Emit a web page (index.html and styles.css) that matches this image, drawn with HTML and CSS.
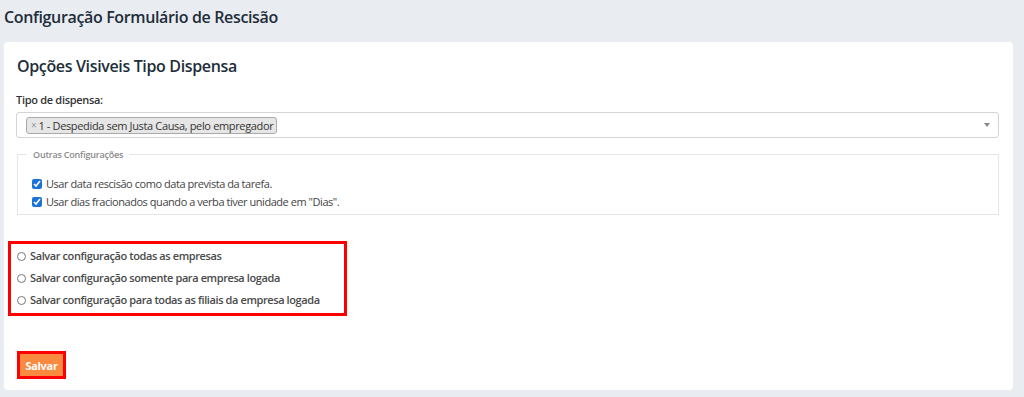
FILE: index.html
```html
<!DOCTYPE html>
<html lang="pt-BR">
<head>
<meta charset="utf-8">
<title>Configuração Formulário de Rescisão</title>
<link rel="stylesheet" href="styles.css">
</head>
<body>
<h1 class="page-title">Configuração Formulário de Rescisão</h1>
<div class="card">
  <h2 class="card-title">Opções Visiveis Tipo Dispensa</h2>
  <label class="field-label">Tipo de dispensa:</label>
  <div class="select-box">
    <span class="tag"><span class="tag-x">×</span>1 - Despedida sem Justa Causa, pelo empregador</span>
    <span class="caret"></span>
  </div>
  <fieldset class="group">
    <legend>Outras Configurações</legend>
    <label class="check"><input type="checkbox" checked> Usar data rescisão como data prevista da tarefa.</label>
    <label class="check"><input type="checkbox" checked> Usar dias fracionados quando a verba tiver unidade em "Dias".</label>
  </fieldset>
  <div class="radio-box">
    <label class="radio"><input type="radio" name="scope"> Salvar configuração todas as empresas</label>
    <label class="radio"><input type="radio" name="scope"> Salvar configuração somente para empresa logada</label>
    <label class="radio"><input type="radio" name="scope"> Salvar configuração para todas as filiais da empresa logada</label>
  </div>
  <div class="actions">
    <button class="btn-save">Salvar</button>
  </div>
</div>
</body>
</html>
```
FILE: styles.css
```css
html, body {
  margin: 0;
  padding: 0;
}
body {
  background: #e9ecf1;
  font-family: "Open Sans", "Noto Sans", sans-serif;
  color: #2b3644;
  height: 397px;
  overflow: hidden;
}
.page-title {
  margin: 0;
  padding: 6px 4px 0 4px;
  height: 42px;
  box-sizing: border-box;
  font-size: 16px;
  line-height: 22px;
  font-weight: 600;
  letter-spacing: -0.35px;
  color: #222d3a;
}
.card {
  margin: 0 11px 0 4px;
  height: 348px;
  box-sizing: border-box;
  background: #fff;
  border-radius: 4px;
  padding: 13px 14px 0 12px;
}
.card-title {
  margin: 0 0 0 1px;
  font-size: 16px;
  font-weight: 600;
  letter-spacing: -0.35px;
  line-height: 22px;
  color: #222d3a;
}
.field-label {
  display: block;
  margin-top: 15px;
  font-size: 11px;
  font-weight: 600;
  letter-spacing: -0.3px;
  color: #333;
  line-height: 16px;
}
.select-box {
  margin-top: 4px;
  height: 26px;
  box-sizing: border-box;
  border: 1px solid #d4d4d4;
  border-radius: 3px;
  display: flex;
  align-items: center;
  padding: 0 8px 0 9px;
}
.tag {
  display: inline-flex;
  align-items: center;
  height: 17px;
  box-sizing: border-box;
  border: 1px solid #aaa;
  border-radius: 3px;
  background: #e6e6e6;
  padding: 0 3px 0 4px;
  font-size: 11px;
  letter-spacing: -0.35px;
  color: #333;
  white-space: nowrap;
}
.tag-x {
  color: #999;
  margin-right: 2px;
  font-size: 10px;
}
.caret {
  margin-left: auto;
  width: 0;
  height: 0;
  border-left: 3px solid transparent;
  border-right: 3px solid transparent;
  border-top: 4px solid #888;
}
.group {
  margin: 10px 0 0 1px;
  border: 1px solid #e5e5e5;
  padding: 14px 15px 3px 14px;
  min-width: 0;
}
.group legend {
  font-size: 9px;
  font-weight: 600;
  letter-spacing: -0.2px;
  color: #8a8a8a;
  padding: 0 6px;
  margin-left: -5px;
}
.check {
  display: flex;
  align-items: center;
  font-size: 11px;
  letter-spacing: -0.45px;
  color: #444;
  line-height: 18px;
}
.check input {
  margin: 0 4px 0 0;
  width: 10px;
  height: 10px;
  accent-color: #1a73d9;
}
.radio-box {
  margin: 26px 0 0 -8px;
  width: 339px;
  box-sizing: border-box;
  border: 3px solid #ff0000;
  padding: 1px 0 2px 6px;
}
.radio {
  display: flex;
  align-items: center;
  font-size: 11px;
  font-weight: 600;
  letter-spacing: -0.4px;
  color: #4a4a4a;
  line-height: 22px;
}
.radio input {
  margin: 0 4px 0 0;
  width: 9px;
  height: 9px;
}
.actions {
  margin-top: 35px;
}
.btn-save {
  font-family: inherit;
  font-size: 11px;
  font-weight: 700;
  letter-spacing: -0.3px;
  color: #fff;
  background: #fa8a3f;
  border: 3px solid #ff0000;
  border-radius: 0;
  width: 49px;
  height: 28px;
  padding: 0;
  margin-left: 1px;
  display: block;
}
```
